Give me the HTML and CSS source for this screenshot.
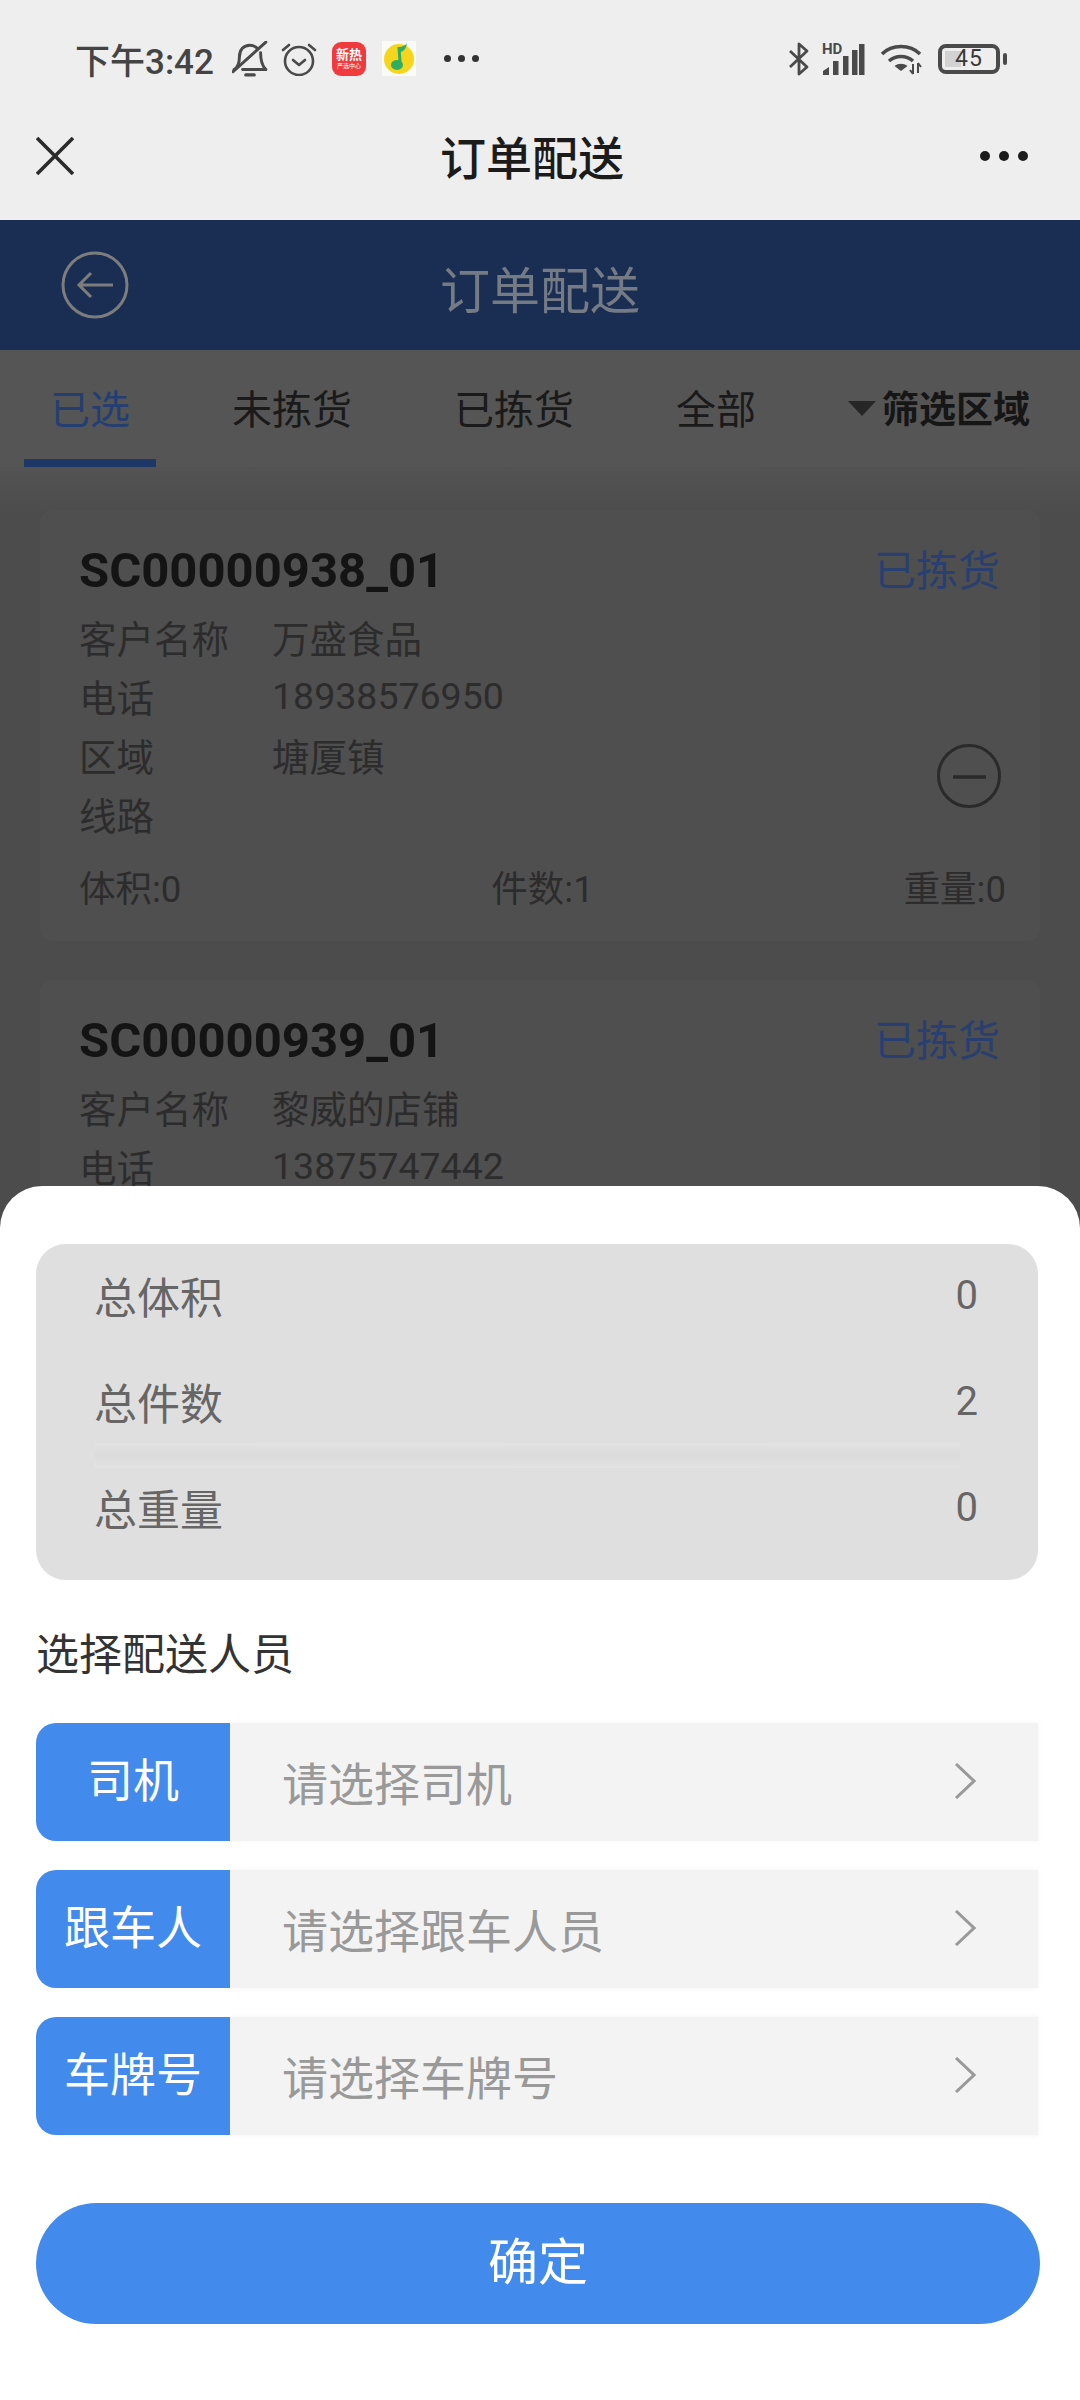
FILE: index.html
```html
<!DOCTYPE html>
<html lang="zh-CN">
<head>
    <meta charset="UTF-8">
    <meta name="viewport" content="width=device-width, initial-scale=1.0">
    <title>订单配送</title>
    <link rel="stylesheet" href="styles.css">
</head>
<body>
<div class="phone">

    <header class="top">
        <div class="status">
            <span class="time">下午3:42</span>
            <svg class="ic-bell" viewBox="0 0 34 34" fill="none" stroke="#4a4a4a" stroke-width="2.800" stroke-linecap="round" stroke-linejoin="round">
                <path d="M2 27c3-2 5-5 5-12 0-7 4-11 10-11 3 0 5 1 7 3"/>
                <path d="M27 11c0 6 1 12 5 16H10"/>
                <path d="M1 29L32 1"/>
                <path d="M13 32h8" stroke-width="3"/>
            </svg>
            <svg class="ic-alarm" viewBox="0 0 36 34" fill="none" stroke="#4a4a4a" stroke-width="2.600" stroke-linecap="round" stroke-linejoin="round">
                <circle cx="18" cy="19" r="14"/>
                <path d="M12 18l6 5 6-5"/>
                <path d="M2 8l6-5M34 8l-6-5"/>
            </svg>
            <div class="ic-red"><b>新热</b><i>严选中心</i></div>
            <svg class="ic-qq" viewBox="0 0 34 35">
                <rect width="34" height="35" fill="#fbfbf6"/>
                <circle cx="17" cy="18" r="15" fill="#f6d51c"/>
                <path d="M17 6l1 15" stroke="#2fae63" stroke-width="3" fill="none"/>
                <path d="M17 6c3 0 7-2 8-4-1 5-2 8-7 9z" fill="#2fae63"/>
                <ellipse cx="15" cy="24" rx="6" ry="5" fill="#2fae63"/>
            </svg>
            <div class="dots-sm"><span></span><span></span><span></span></div>
            <div class="status-right">
                <svg class="ic-bt" viewBox="0 0 22 34" fill="none" stroke="#4a4a4a" stroke-width="2.800" stroke-linejoin="round">
                    <path d="M2 9l17 16-8 7V2l8 7L2 25"/>
                </svg>
                <svg class="ic-signal" viewBox="0 -4 43 36">
                    <text x="0" y="11" class="hd">HD</text>
                    <path d="M1 32v-4l6-4v8z" fill="#4a4a4a"/>
                    <rect x="11" y="18" width="5.500" height="14" fill="#4a4a4a"/>
                    <rect x="21" y="13" width="5.500" height="19" fill="#4a4a4a"/>
                    <rect x="30" y="7" width="5.500" height="25" fill="#4a4a4a"/>
                    <rect x="37" y="1" width="5.500" height="31" fill="#4a4a4a"/>
                </svg>
                <svg class="ic-wifi" viewBox="0 0 43 32">
                    <path d="M2 11C12 1 30 1 40 11" fill="none" stroke="#4a4a4a" stroke-width="3.600"/>
                    <path d="M9 18c7-6 17-6 24 0" fill="none" stroke="#4a4a4a" stroke-width="3.600"/>
                    <path d="M14.500 23c4-3 9-3 13 0l-6.500 5z" fill="#4a4a4a"/>
                    <path d="M33 21v10M33 31l-3-4M38 20v10M38 20l3 4" fill="none" stroke="#4a4a4a" stroke-width="2"/>
                </svg>
                <div class="battery"><span class="level"></span><span class="num">45</span></div>
                <span class="cap"></span>
            </div>
        </div>
        <nav class="nav">
            <svg class="ic-close" viewBox="0 0 38 38" fill="none" stroke="#2b2b2b" stroke-width="3.600">
                <path d="M1 1l36 36M37 1L1 37"/>
            </svg>
            <h1>订单配送</h1>
            <div class="dots"><span></span><span></span><span></span></div>
        </nav>
    </header>

    <!-- page behind the sheet, colours already dimmed -->
    <div class="bar">
        <svg class="ic-back" viewBox="0 0 68 68" fill="none" stroke="#7d7d7d" stroke-width="3">
            <circle cx="34" cy="34" r="32"/>
            <path d="M52 34H18M30 22L18 34l12 12"/>
        </svg>
        <div class="bar-title">订单配送</div>
    </div>

    <div class="tabs">
        <div class="tab active">已选</div>
        <div class="tab">未拣货</div>
        <div class="tab">已拣货</div>
        <div class="tab">全部</div>
        <div class="filter"><span class="tri"></span>筛选区域</div>
    </div>

    <div class="list">
        <section class="card">
            <div class="card-head">
                <div class="order-no">SC00000938_01</div>
                <div class="order-state">已拣货</div>
            </div>
            <div class="card-body">
                <div class="rows">
                    <div class="row"><span class="k">客户名称</span><span>万盛食品</span></div>
                    <div class="row"><span class="k">电话</span><span>18938576950</span></div>
                    <div class="row"><span class="k">区域</span><span>塘厦镇</span></div>
                    <div class="row"><span class="k">线路</span></div>
                </div>
                <svg class="ic-minus" viewBox="0 0 64 64" fill="none" stroke="#2a2a2a">
                    <circle cx="32" cy="32" r="30.500" stroke-width="3"/>
                    <path d="M16 33h33" stroke-width="3.500"/>
                </svg>
            </div>
            <div class="card-foot">
                <span>体积:0</span><span>件数:1</span><span>重量:0</span>
            </div>
        </section>
        <section class="card">
            <div class="card-head">
                <div class="order-no">SC00000939_01</div>
                <div class="order-state">已拣货</div>
            </div>
            <div class="card-body">
                <div class="rows">
                    <div class="row"><span class="k">客户名称</span><span>黎威的店铺</span></div>
                    <div class="row"><span class="k">电话</span><span>13875747442</span></div>
                </div>
            </div>
        </section>
    </div>

    <div class="sheet">
        <div class="summary">
            <div class="sum-row"><span>总体积</span><span class="val">0</span></div>
            <div class="sum-row"><span>总件数</span><span class="val">2</span></div>
            <div class="sum-line"></div>
            <div class="sum-row"><span>总重量</span><span class="val">0</span></div>
        </div>
        <div class="pick-title">选择配送人员</div>
        <div class="pick">
            <div class="pick-label">司机</div>
            <div class="pick-input">
                <span>请选择司机</span>
                <svg class="ic-chev" viewBox="0 0 22 36" fill="none" stroke="#999" stroke-width="3"><path d="M2 1l18 17L2 35"/></svg>
            </div>
        </div>
        <div class="pick">
            <div class="pick-label">跟车人</div>
            <div class="pick-input">
                <span>请选择跟车人员</span>
                <svg class="ic-chev" viewBox="0 0 22 36" fill="none" stroke="#999" stroke-width="3"><path d="M2 1l18 17L2 35"/></svg>
            </div>
        </div>
        <div class="pick">
            <div class="pick-label">车牌号</div>
            <div class="pick-input">
                <span>请选择车牌号</span>
                <svg class="ic-chev" viewBox="0 0 22 36" fill="none" stroke="#999" stroke-width="3"><path d="M2 1l18 17L2 35"/></svg>
            </div>
        </div>
        <button class="ok">确定</button>
    </div>

</div>
</body>
</html>
```

FILE: styles.css
```css
* {
    box-sizing: border-box;
}
html, body {
    margin: 0;
    padding: 0;
}
body {
    font-family: Roboto, "Noto Sans CJK SC", sans-serif;
}
.phone {
    position: relative;
    width: 1080px;
    height: 2400px;
    overflow: hidden;
    background: #4c4c4c;
}

/* system bar and webview nav */
.top {
    height: 220px;
    background: #eeeeef;
}
.status {
    height: 117px;
    padding: 0 73px 0 75px;
    display: flex;
    align-items: center;
}
.time {
    width: 157px;
    font-size: 35px;
    font-weight: 500;
    color: #444;
    white-space: nowrap;
}
.ic-bell {
    width: 36px;
    height: 36px;
}
.ic-alarm {
    width: 36px;
    height: 34px;
    margin-left: 13px;
}
.ic-red {
    width: 34px;
    height: 34px;
    margin-left: 15px;
    border-radius: 9px;
    background: #f03a3e;
    color: #fff;
    display: flex;
    flex-direction: column;
    align-items: center;
    justify-content: center;
    overflow: hidden;
}
.ic-red b {
    font-size: 13px;
    line-height: 15px;
    white-space: nowrap;
}
.ic-red i {
    font-size: 6px;
    line-height: 8px;
    font-style: normal;
    white-space: nowrap;
}
.ic-qq {
    width: 34px;
    height: 35px;
    margin-left: 16px;
}
.dots-sm {
    display: flex;
    gap: 7px;
    margin-left: 28px;
}
.dots-sm span {
    width: 7px;
    height: 7px;
    border-radius: 50%;
    background: #333;
}
.status-right {
    margin-left: auto;
    display: flex;
    align-items: center;
}
.ic-bt {
    width: 22px;
    height: 34px;
}
.ic-signal {
    width: 43px;
    height: 36px;
    margin: 0 0 4px 12px;
}
.hd {
    font-family: Roboto, sans-serif;
    font-size: 15px;
    font-weight: 700;
    fill: #4a4a4a;
}
.ic-wifi {
    width: 43px;
    height: 32px;
    margin-left: 15px;
}
.battery {
    position: relative;
    width: 62px;
    height: 30px;
    margin-left: 15px;
    border: 4px solid #4a4a4a;
    border-radius: 8px;
    display: flex;
    align-items: center;
    justify-content: center;
}
.level {
    position: absolute;
    left: 3px;
    top: 3px;
    bottom: 3px;
    width: 16px;
    background: #d2d2d2;
}
.num {
    position: relative;
    font-size: 23px;
    letter-spacing: 1px;
    color: #3a3a3a;
}
.cap {
    width: 4px;
    height: 12px;
    margin-left: 3px;
    border-radius: 2px;
    background: #4a4a4a;
}
.nav {
    height: 76px;
    padding: 0 52px 0 36px;
    display: grid;
    grid-template-columns: 1fr auto 1fr;
    align-items: center;
}
.ic-close {
    width: 38px;
    height: 38px;
    margin-top: 2px;
}
.nav h1 {
    margin: 0;
    font-size: 46px;
    font-weight: 500;
    color: #1b1b1b;
}
.dots {
    justify-self: end;
    display: flex;
    gap: 9px;
    margin-top: 2px;
}
.dots span {
    width: 10px;
    height: 10px;
    border-radius: 50%;
    background: #1b1b1b;
}

/* app title bar */
.bar {
    height: 130px;
    padding: 0 61px;
    background: #1a2d52;
    display: grid;
    grid-template-columns: 1fr auto 1fr;
    align-items: center;
}
.ic-back {
    width: 68px;
    height: 68px;
}
.bar-title {
    padding-top: 3px;
    font-size: 50px;
    color: #747b85;
}

/* tabs */
.tabs {
    height: 117px;
    padding: 0 50px 0 24px;
    background: #555;
    display: flex;
    gap: 50px;
}
.tab {
    padding: 31px 26px 18px;
    height: 117px;
    font-size: 40px;
    line-height: 60px;
    color: #1a1a1a;
    border-bottom: 8px solid transparent;
}
.tab.active {
    color: #233e72;
    border-bottom-color: #1c3768;
}
.filter {
    margin-left: auto;
    padding-top: 31px;
    font-size: 37px;
    line-height: 60px;
    font-weight: 700;
    color: #161616;
    display: flex;
    align-items: flex-start;
}
.tri {
    width: 0;
    height: 0;
    margin: 20px 6px 0 0;
    border-left: 14px solid transparent;
    border-right: 14px solid transparent;
    border-top: 15px solid #262626;
}

/* order list */
.list {
    padding: 43px 40px 0 40px;
    background: linear-gradient(#535353, #4c4c4c 50px);
}
.card {
    margin-bottom: 39px;
    padding: 30px 34px 30px 39px;
    background: #4f4f4f;
    border-radius: 12px;
}
.card-head {
    display: flex;
    justify-content: space-between;
    align-items: center;
    height: 60px;
}
.order-no {
    font-size: 49px;
    font-weight: 700;
    color: #141414;
}
.order-state {
    margin: 0 6px 5px 0;
    font-size: 42px;
    color: #283f70;
}
.card-body {
    margin-top: 7px;
    display: flex;
    justify-content: space-between;
    align-items: flex-end;
}
.row {
    height: 59px;
    display: flex;
    align-items: center;
    font-size: 37.500px;
    color: #2c2c2c;
}
.k {
    width: 193px;
}
.ic-minus {
    width: 64px;
    height: 64px;
    margin: 0 5px 35px 0;
}
.card-foot {
    margin-top: 18px;
    height: 50px;
    display: flex;
    justify-content: space-between;
    align-items: center;
    font-size: 36.500px;
    color: #2c2c2c;
}

/* bottom sheet */
.sheet {
    position: absolute;
    left: 0;
    right: 0;
    bottom: 0;
    height: 1214px;
    padding: 58px 40px 0 36px;
    background: #fff;
    border-radius: 42px 42px 0 0;
}
.summary {
    position: relative;
    height: 336px;
    margin-right: 2px;
    padding: 0 60px 18px 58px;
    background: #dfdfdf;
    border-radius: 30px;
}
.sum-row {
    height: 106px;
    padding-bottom: 4px;
    display: flex;
    justify-content: space-between;
    align-items: center;
    font-size: 43px;
    color: #666;
}
.val {
    font-size: 40px;
}
.sum-line {
    position: absolute;
    left: 59px;
    right: 78px;
    top: 199px;
    height: 25px;
    background: linear-gradient(#e3e3e3, #dbdbdb 50%, #e3e3e3);
}
.pick-title {
    margin-top: 45px;
    font-size: 43px;
    line-height: 60px;
    color: #333;
}
.pick {
    height: 118px;
    margin: 29px 2px 0 0;
    display: flex;
}
.pick-title + .pick {
    margin-top: 38px;
}
.pick-label {
    position: relative;
    width: 194px;
    padding-bottom: 11px;
    background: #428aec;
    border-radius: 20px 0 0 20px;
    color: #fff;
    font-size: 46px;
    display: flex;
    align-items: center;
    justify-content: center;
}
.pick-input {
    flex: 1;
    padding: 0 62px 2px 52px;
    background: #f3f3f3;
    box-shadow: 0 0 5px #f3f3f3;
    color: #999;
    font-size: 46px;
    display: flex;
    align-items: center;
    justify-content: space-between;
}
.ic-chev {
    width: 22px;
    height: 36px;
}
.ok {
    display: block;
    width: 1004px;
    height: 121px;
    margin-top: 68px;
    border: 0;
    padding: 0 0 12px;
    border-radius: 61px;
    background: #428aec;
    color: #fff;
    font-family: inherit;
    font-size: 50px;
}
```
